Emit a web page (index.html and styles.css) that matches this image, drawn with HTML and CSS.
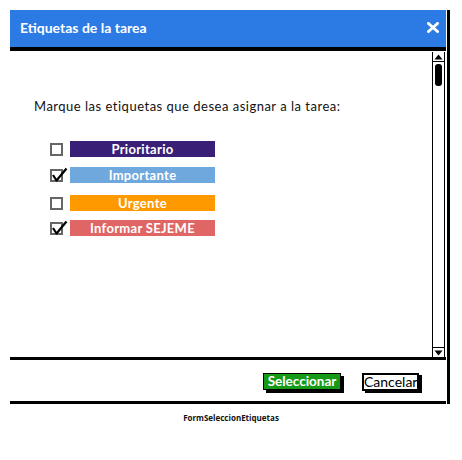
FILE: index.html
```html
<!DOCTYPE html>
<html lang="es">
<head>
<meta charset="utf-8">
<title>FormSeleccionEtiquetas</title>
<link rel="stylesheet" href="styles.css">
</head>
<body>
<div class="frame">
  <div class="window">
    <div class="titlebar">
      <span class="title">Etiquetas de la tarea</span>
      <svg class="close" width="12" height="11" viewBox="0 0 12 11"><path d="M1.5 1.5 L10.5 9.5 M10.5 1.5 L1.5 9.5" stroke="#fff" stroke-width="3" stroke-linecap="round"/></svg>
    </div>
    <div class="panel">
      <div class="content">
        <p class="prompt">Marque las etiquetas que desea asignar a la tarea:</p>
        <ul class="tags">
          <li class="tag"><span class="check"></span><span class="label prio">Prioritario</span></li>
          <li class="tag t2"><span class="check"><svg class="tick" width="17" height="15" viewBox="0 0 17 15"><path d="M2 8 L5.5 13.5 L15.5 1.5" fill="none" stroke="#000" stroke-width="2.2" stroke-linejoin="round"/></svg></span><span class="label imp">Importante</span></li>
          <li class="tag t3"><span class="check"></span><span class="label urg">Urgente</span></li>
          <li class="tag t4"><span class="check"><svg class="tick" width="17" height="15" viewBox="0 0 17 15"><path d="M2 8 L5.5 13.5 L15.5 1.5" fill="none" stroke="#000" stroke-width="2.2" stroke-linejoin="round"/></svg></span><span class="label inf">Informar SEJEME</span></li>
        </ul>
      </div>
      <div class="scrollbar">
        <div class="arrow up"><svg width="9" height="6" viewBox="0 0 9 6"><path d="M0.5 5.5 L4.5 0.5 L8.5 5.5 Z" fill="#000"/></svg></div>
        <div class="track"><div class="thumb"></div></div>
        <div class="arrow down"><svg width="9" height="6" viewBox="0 0 9 6"><path d="M0.5 0.5 L4.5 5.5 L8.5 0.5 Z" fill="#000"/></svg></div>
      </div>
    </div>
    <div class="footer">
      <button class="btn primary">Seleccionar</button>
      <button class="btn secondary">Cancelar</button>
    </div>
  </div>
  <div class="caption">FormSeleccionEtiquetas</div>
</div>
</body>
</html>
```
FILE: styles.css
```css
* { box-sizing: border-box; }
html, body { margin: 0; padding: 0; background: #fff; }
body { font-family: "Lato", "DejaVu Sans", sans-serif; }

.frame { width: 462px; height: 460px; padding-top: 10px; }

.window {
  margin-left: 10px;
  width: 440px;
  padding-right: 1px;
  border-right: 3px solid #000;
  display: flex;
  flex-direction: column;
}

.titlebar {
  height: 41px;
  background: #2c7be5;
  border-bottom: 4px solid #000;
  display: flex;
  align-items: center;
  justify-content: space-between;
  padding: 0 7px 2px 10px;
}
.title { color: #fff; font-size: 14px; font-weight: 700; }
.close { display: block; }

.panel {
  height: 309px;
  border-bottom: 3px solid #000;
  display: flex;
}
.content { flex: 1; padding: 47px 0 0 24px; }
.prompt { margin: 0; font-size: 13px; line-height: 16px; color: #111; letter-spacing: 0.5px; }

.tags { list-style: none; margin: 27px 0 0 16px; padding: 0; }
.tag { display: flex; align-items: center; height: 16px; }
.t2 { margin-top: 10px; }
.t3 { margin-top: 12px; }
.t4 { margin-top: 9px; }

.check {
  position: relative;
  width: 13px;
  height: 13px;
  border: 2px solid #666;
  background: #fff;
  margin-right: 7px;
}
.tick { position: absolute; left: -1px; top: -4px; }

.label {
  width: 145px;
  height: 16px;
  line-height: 16px;
  text-align: center;
  color: #fff;
  font-size: 13px;
  font-weight: 700;
  letter-spacing: 0.3px;
}
.prio { background: #3a1f77; }
.imp { background: #6fa8dc; }
.urg { background: #ff9900; }
.inf { background: #e06666; }

.scrollbar {
  width: 13px;
  margin: 1px 1px 0 0;
  border-left: 1px solid #000;
  border-right: 1px solid #000;
  display: flex;
  flex-direction: column;
}
.arrow { height: 10px; display: flex; align-items: center; justify-content: center; }
.arrow.up { border-bottom: 1px solid #000; }
.arrow.down { border-top: 1px solid #000; }
.track { flex: 1; padding: 2px 1px 0 2px; }
.thumb { width: 7px; height: 22px; background: #000; border-radius: 3px; }

.footer {
  height: 44px;
  border-bottom: 3px solid #000;
  display: flex;
  align-items: center;
  justify-content: flex-end;
  padding-right: 27px;
  gap: 21px;
}
.btn {
  font-family: "Lato", "DejaVu Sans", sans-serif;
  padding: 0;
  cursor: pointer;
}
.primary {
  width: 78px;
  height: 17px;
  line-height: 15px;
  background: #159a17;
  color: #fff;
  font-size: 13.5px;
  font-weight: 700;
  border: 1px solid #000;
  box-shadow: 3px 3px 0 #000;
  margin-top: 1px;
}
.secondary {
  width: 57px;
  height: 18px;
  line-height: 14px;
  background: #fff;
  color: #000;
  font-size: 14px;
  border: 2px solid #000;
  box-shadow: 3px 2px 0 #000;
  margin-top: 2px;
}

.caption {
  margin-top: 8px;
  text-align: center;
  font-family: "Open Sans", "Liberation Sans", sans-serif;
  font-size: 8px;
  line-height: 12px;
  font-weight: 700;
  color: #111;
}
```
